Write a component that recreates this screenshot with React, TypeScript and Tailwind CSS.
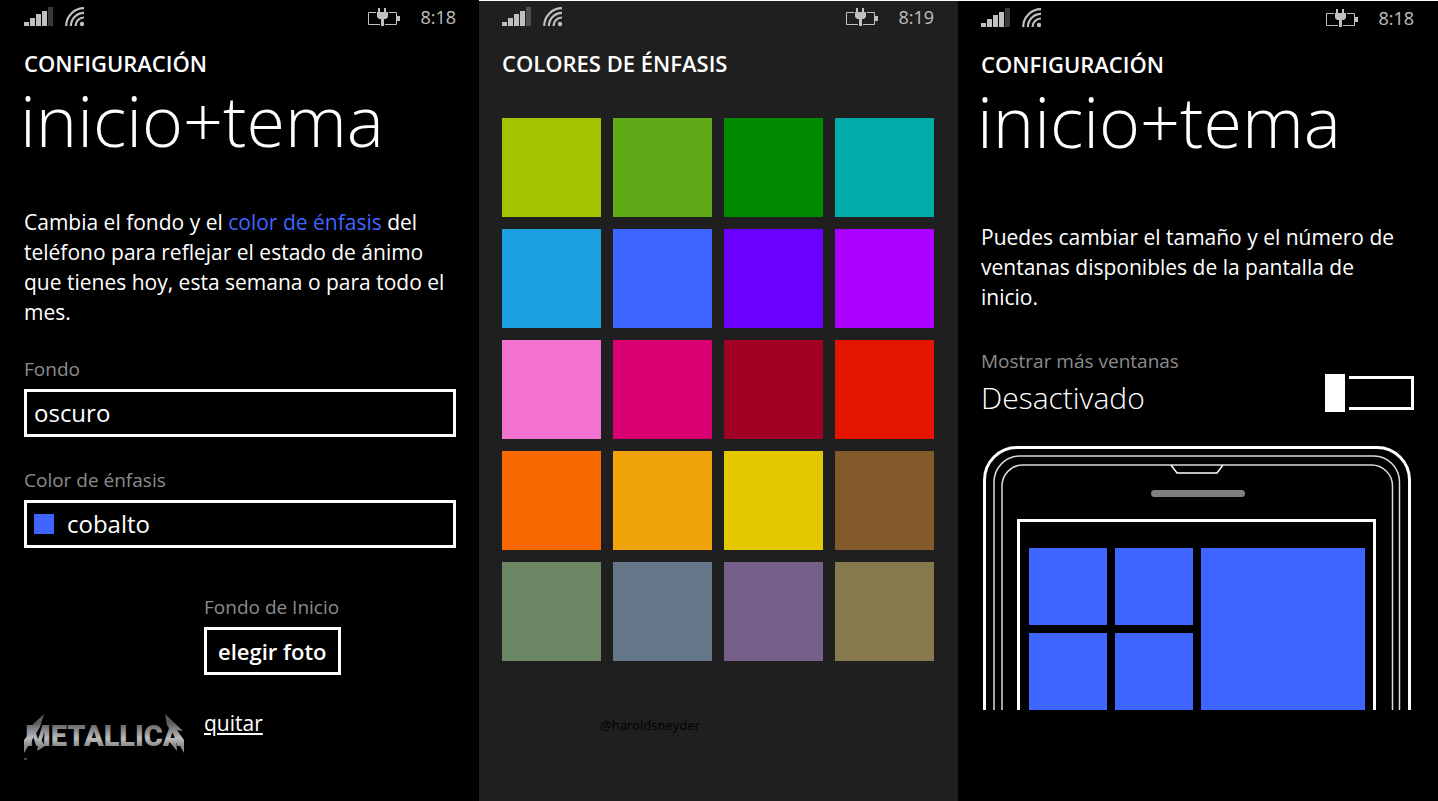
import clsx from "clsx";
import { FC, ReactNode, useState } from "react";

interface Accent {
  name: string;
  className: string;
}

const accents: Accent[] = [
  { name: "lima", className: "bg-[#a4c400]" },
  { name: "verde", className: "bg-[#60a917]" },
  { name: "esmeralda", className: "bg-[#008a00]" },
  { name: "verde azulado", className: "bg-[#00aba9]" },
  { name: "cian", className: "bg-[#1ba1e2]" },
  { name: "cobalto", className: "bg-[#3e65ff]" },
  { name: "índigo", className: "bg-[#6a00ff]" },
  { name: "violeta", className: "bg-[#aa00ff]" },
  { name: "rosa", className: "bg-[#f472d0]" },
  { name: "magenta", className: "bg-[#d80073]" },
  { name: "carmesí", className: "bg-[#a20025]" },
  { name: "rojo", className: "bg-[#e51400]" },
  { name: "naranja", className: "bg-[#fa6800]" },
  { name: "ámbar", className: "bg-[#f0a30a]" },
  { name: "amarillo", className: "bg-[#e3c800]" },
  { name: "marrón", className: "bg-[#825a2c]" },
  { name: "oliva", className: "bg-[#6d8764]" },
  { name: "acero", className: "bg-[#647687]" },
  { name: "malva", className: "bg-[#76608a]" },
  { name: "pardo", className: "bg-[#87794e]" },
];

const StatusBar: FC<{ time: string }> = ({ time }) => (
  <div className="flex h-[34px] items-center text-[#c0c0c0]">
    <svg width="30" height="20" viewBox="0 0 30 20" fill="currentColor">
      <rect x="0" y="15" width="5" height="4" />
      <rect x="6" y="11" width="5" height="8" />
      <rect x="12" y="7" width="5" height="12" />
      <rect x="18" y="4" width="5" height="15" />
      <rect x="24" y="0" width="5" height="19" fillOpacity="0.3" />
    </svg>
    <svg
      className="ml-[11px]"
      width="20"
      height="20"
      viewBox="0 0 20 20"
      fill="none"
      stroke="currentColor"
      strokeWidth="2.200"
    >
      <path d="M1.200 19A17.800 17.800 0 0 1 19 1.200" />
      <path d="M5.900 19A13.100 13.100 0 0 1 19 5.900" />
      <path d="M10.500 19A8.500 8.500 0 0 1 19 10.500" />
      <circle cx="17" cy="17" r="2.200" fill="currentColor" stroke="none" />
    </svg>
    <svg className="ml-auto" width="32" height="18" viewBox="0 0 32 18" fill="currentColor">
      <path d="M8 4.500H.5v12H12M17 16.500h11.500v-12H21" fill="none" stroke="currentColor" />
      <rect x="29" y="8" width="3" height="5" />
      <path d="M10 0h2v4h4V0h2v4h2v5l-2 2h-2v7h-3v-7h-2L9 9V4h1z" />
    </svg>
    <time className="ml-5 text-[18px]">{time}</time>
  </div>
);

interface PanelProps {
  heading: string;
  time: string;
  className?: string;
  children: ReactNode;
}

const Panel: FC<PanelProps> = ({ heading, time, className, children }) => (
  <section className={clsx("flex flex-col", className)}>
    <StatusBar time={time} />
    <h2 className="mt-[14px] text-[22px] leading-[30px] font-semibold">{heading}</h2>
    {children}
  </section>
);

const Title: FC = () => (
  <h1 className="-ml-1 text-[70px] leading-[84px] font-light whitespace-nowrap">inicio+tema</h1>
);

const BandLogo: FC = () => (
  <svg className="mt-[5px] w-40 shrink-0" height="160" viewBox="0 0 160 160">
    <defs>
      <linearGradient id="steel" gradientUnits="userSpaceOnUse" x1="0" y1="113" x2="0" y2="152">
        <stop offset="0.250" stopColor="#5c5c5c" />
        <stop offset="0.650" stopColor="#bcbcbc" />
        <stop offset="0.850" stopColor="#8a8a8a" />
      </linearGradient>
    </defs>
    <g fill="url(#steel)">
      <text
        x="80"
        y="146"
        textAnchor="middle"
        fontSize="29"
        className="font-['Roboto'] font-black"
      >
        METALLICA
      </text>
      {/* lightning spikes on the first and last letters */}
      <path d="M20 114 2 131l6-1-8 10v13l11-18 5-8z" />
      <path d="M16 138 13 151l8-5z" />
      <path d="m141 114 18 17-6-1 7 10v13l-10-18-7-10z" />
      <path d="m144 140 9 11-1-12z" />
      <path d="M0 158.500h3v1H0z" />
    </g>
  </svg>
);

const ThemePanel: FC = () => (
  <Panel heading="CONFIGURACIÓN" time="8:18" className="bg-black pr-[23px] pl-6">
    <Title />
    <p className="mt-[45px] text-[21px] leading-[30px]">
      Cambia el fondo y el{" "}
      <a href="#accents" className="text-[#3e65ff]">
        color de énfasis
      </a>{" "}
      del teléfono para reflejar el estado de ánimo que tienes hoy, esta semana o para todo el mes.
    </p>
    <label htmlFor="background" className="mt-[30px] text-[19px] leading-6 text-[#8c8c8c]">
      Fondo
    </label>
    <select
      id="background"
      className="mt-2 h-12 appearance-none border-3 border-white bg-black px-[7px] text-[24px]"
    >
      <option>oscuro</option>
      <option>claro</option>
    </select>
    <label htmlFor="accent" className="mt-[31px] text-[19px] leading-6 text-[#8c8c8c]">
      Color de énfasis
    </label>
    <div className="mt-2 flex h-12 items-center gap-[13px] border-3 border-white pl-[7px]">
      <span className="size-5 bg-[#3e65ff]" />
      <select
        id="accent"
        defaultValue="cobalto"
        className="flex-1 appearance-none bg-black text-[24px]"
      >
        {accents.map((accent) => (
          <option key={accent.name}>{accent.name}</option>
        ))}
      </select>
    </div>
    <div className="mt-[47px] flex gap-5">
      <BandLogo />
      <div className="flex flex-col items-start">
        <span className="text-[19px] leading-6 text-[#8c8c8c]">Fondo de Inicio</span>
        <button className="mt-2 h-12 border-3 border-white px-[11px] text-[22px] font-semibold">
          elegir foto
        </button>
        <a href="#remove" className="mt-[33px] text-[21px] leading-[30px] underline">
          quitar
        </a>
      </div>
    </div>
  </Panel>
);

const AccentPanel: FC = () => (
  <Panel
    heading="COLORES DE ÉNFASIS"
    time="8:19"
    className="bg-[#1f1f1f] pr-6 pl-[23px] shadow-[inset_0_1px_0_#ffffff]"
  >
    <div id="accents" className="mt-10 grid grid-cols-4 gap-3">
      {accents.map((accent) => (
        <button
          key={accent.name}
          aria-label={accent.name}
          className={clsx("aspect-square", accent.className)}
        />
      ))}
    </div>
    <p className="mt-[54px] ml-[98px] text-[13px] leading-5 text-black">@haroldsneyder</p>
  </Panel>
);

const Phone: FC = () => (
  <svg className="mt-[23px] w-full" viewBox="0 0 433 264" fill="none" stroke="#ffffff">
    <path
      d="M3.500 264V34a32.500 32.500 0 0 1 32.500-32.500H396a32.500 32.500 0 0 1 32.500 32.500V264"
      strokeWidth="3"
    />
    <path
      d="M13 264V36a26 26 0 0 1 26-26H393a26 26 0 0 1 25.500 26V264"
      strokeWidth="1.500"
      strokeOpacity="0.850"
    />
    <path
      d="M21 264V40a21 21 0 0 1 21-21H390a21 21 0 0 1 21.500 21V264"
      strokeWidth="1.500"
      strokeOpacity="0.850"
    />
    <path d="M190 19l6 8h40l6-8" strokeWidth="1.500" />
    <rect x="170" y="44" width="94" height="7" rx="3.500" fill="#808080" stroke="none" />
    <path d="M37.500 264V74.500H393.500V264" strokeWidth="3" />
    <g fill="#3e65ff" stroke="none">
      <rect x="48" y="102" width="78" height="77" />
      <rect x="134" y="102" width="78" height="77" />
      <rect x="48" y="187" width="78" height="77" />
      <rect x="134" y="187" width="78" height="77" />
      <rect x="220" y="102" width="164" height="162" />
    </g>
  </svg>
);

const Toggle: FC<{ id: string; checked: boolean; onChange: (on: boolean) => void }> = ({
  id,
  checked,
  onChange,
}) => (
  <span
    className={clsx("relative flex h-[38px] items-center gap-1", checked && "flex-row-reverse")}
  >
    <span className="h-full w-5 bg-white" />
    <span
      className={clsx(
        "h-[34px] w-[65px] border-3 border-white",
        checked ? "border-r-0 bg-[#3e65ff]" : "border-l-0"
      )}
    />
    <input
      id={id}
      type="checkbox"
      checked={checked}
      onChange={(e) => onChange(e.target.checked)}
      className="absolute inset-0 size-full cursor-pointer opacity-0"
    />
  </span>
);

const TilesPanel: FC = () => {
  const [more, setMore] = useState(false);
  return (
    <Panel
      heading="CONFIGURACIÓN"
      time="8:18"
      className="border-t border-white bg-black pr-6 pl-[23px]"
    >
      <Title />
      <p className="mt-[59px] text-[21px] leading-[30px]">
        Puedes cambiar el tamaño y el número de ventanas disponibles de la pantalla de inicio.
      </p>
      <div className="mt-[37px] flex items-end justify-between">
        <div className="flex flex-col">
          <label htmlFor="more" className="text-[19px] leading-6 text-[#8c8c8c]">
            Mostrar más ventanas
          </label>
          <span className="text-[30px] leading-[50px] font-light">
            {more ? "Activado" : "Desactivado"}
          </span>
        </div>
        <div className="mb-[11px]">
          <Toggle id="more" checked={more} onChange={setMore} />
        </div>
      </div>
      <Phone />
    </Panel>
  );
};

export default function App() {
  return (
    <main className="grid min-h-screen grid-cols-[479fr_479fr_480fr] bg-black font-['Open_Sans','Noto_Sans',sans-serif] text-white">
      <ThemePanel />
      <AccentPanel />
      <TilesPanel />
    </main>
  );
}
